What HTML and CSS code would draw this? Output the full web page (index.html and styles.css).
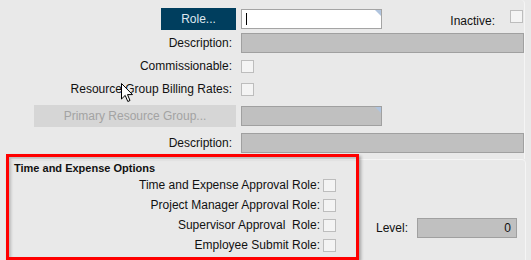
FILE: index.html
```html
<!DOCTYPE html>
<html lang="en">
<head>
<meta charset="UTF-8">
<meta name="viewport" content="width=device-width, initial-scale=1.0">
<title>Role</title>
<link rel="stylesheet" href="styles.css">
</head>
<body>
    <div class="page">
        <div class="main">
            <div class="row row-first">
                <div class="cell"><button class="btn-role">Role...</button></div>
                <div class="input lookup"><span class="caret"></span></div>
                <div class="inactive">
                    <span class="inactive-label">Inactive:</span>
                    <span class="check"></span>
                </div>
            </div>
            <div class="row row-field">
                <div class="cell label">Description:</div>
                <div class="input readonly wide"></div>
            </div>
            <div class="row row-check">
                <div class="cell label">Commissionable:</div>
                <span class="check"></span>
            </div>
            <div class="row row-check">
                <div class="cell label">Resource Group Billing Rates:</div>
                <span class="check"></span>
            </div>
            <div class="row row-first row-gap">
                <div class="cell"><button class="btn-disabled">Primary Resource Group...</button></div>
                <div class="input readonly lookup"></div>
            </div>
            <div class="row row-field row-gap">
                <div class="cell label">Description:</div>
                <div class="input readonly wide"></div>
            </div>
        </div>

        <div class="group">
            <div class="group-left">
                <div class="group-title">Time and Expense Options</div>
                <div class="opt"><span>Time and Expense Approval Role:</span><span class="check"></span></div>
                <div class="opt"><span>Project Manager Approval Role:</span><span class="check"></span></div>
                <div class="opt"><span>Supervisor Approval&nbsp; Role:</span><span class="check"></span></div>
                <div class="opt"><span>Employee Submit Role:</span><span class="check"></span></div>
            </div>
            <div class="level">
                <span class="level-label">Level:</span>
                <div class="input readonly level-field">0</div>
            </div>
        </div>

        <div class="highlight"></div>

        <svg class="pointer" width="13" height="20" viewBox="0 0 13 20">
            <path d="M0.5 0.5 L0.5 16 L4.2 12.4 L6.8 18.5 L9 17.5 L6.5 11.6 L11.5 11.6 Z" fill="#fff" stroke="#000" stroke-width="1"/>
        </svg>
    </div>
</body>
</html>
```

FILE: styles.css
```css
body {
    margin: 0;
    background-color: #e9e9e9;
    font-family: "Liberation Sans", Arial, sans-serif;
    font-size: 12px;
    color: #111;
}

.page {
    position: relative;
    width: 531px;
    height: 260px;
    overflow: hidden;
}

.main {
    width: 524px;
    height: 151px;
    padding-top: 8px;
    border-right: 1px solid #f5f5f5;
    border-top-right-radius: 4px;
}

.row {
    display: flex;
    align-items: center;
}

.row-first {
    height: 22px;
}

.row-field {
    height: 20px;
    margin-top: 3px;
}

.row-check {
    height: 20px;
    margin-top: 3px;
}

.row-gap {
    margin-top: 6px;
}

.cell {
    width: 236px;
    flex-shrink: 0;
    display: flex;
    justify-content: flex-end;
    margin-right: 5px;
}

.label {
    padding-right: 4px;
    box-sizing: border-box;
    white-space: nowrap;
}

button {
    font-family: inherit;
    font-size: 12px;
    border: none;
    padding: 0;
    height: 22px;
    cursor: pointer;
}

.btn-role {
    width: 75px;
    background-color: #003e5e;
    color: #dfe7ee;
}

.btn-disabled {
    width: 202px;
    background-color: #d6d6d6;
    color: #a3a3a3;
}

.input {
    box-sizing: border-box;
    height: 20px;
    border: 1px solid #a4a4a4;
    background-color: #fff;
    position: relative;
}

.lookup {
    width: 141px;
}

.lookup::after {
    content: "";
    position: absolute;
    top: 0;
    right: 0;
    border-style: solid;
    border-width: 0 6px 6px 0;
    border-color: transparent #b0c4de transparent transparent;
}

.readonly {
    background-color: #c0c0c0;
    border-color: #a0a0a0;
}

.wide {
    width: 283px;
}

.caret {
    position: absolute;
    left: 4px;
    top: 3px;
    width: 1px;
    height: 12px;
    background-color: #000;
}

.check {
    display: inline-block;
    box-sizing: border-box;
    width: 13px;
    height: 13px;
    border: 1px solid #bdbdbd;
    background-color: #f4f4f4;
    flex-shrink: 0;
}

.inactive {
    margin-left: auto;
    display: flex;
    align-items: flex-start;
    margin-right: 1px;
}

.inactive-label {
    margin-right: 15px;
    margin-top: 4px;
}

.group {
    display: flex;
    margin-left: 8px;
    width: 516px;
    height: 110px;
    border: 1px solid #f5f5f5;
    border-radius: 4px;
}

.group-left {
    width: 322px;
    padding-left: 5px;
}

.group-title {
    font-weight: bold;
    font-size: 11px;
    height: 14px;
    line-height: 14px;
    margin-top: 1px;
}

.opt {
    display: flex;
    justify-content: flex-end;
    align-items: center;
    height: 20px;
}

.opt span:first-child {
    margin-right: 3px;
}

.level {
    display: flex;
    align-items: center;
    margin-top: 58px;
    margin-left: 40px;
    height: 20px;
}

.level-label {
    margin-right: 9px;
}

.level-field {
    width: 100px;
    text-align: right;
    padding-right: 5px;
    line-height: 18px;
}

.highlight {
    position: absolute;
    left: 6px;
    top: 154px;
    width: 347px;
    height: 100px;
    border: 3px solid #f00;
    box-shadow: 2px 2px 3px rgba(0, 0, 0, 0.3), inset 2px 2px 3px rgba(0, 0, 0, 0.2);
}

.pointer {
    position: absolute;
    left: 121px;
    top: 83px;
}
```
